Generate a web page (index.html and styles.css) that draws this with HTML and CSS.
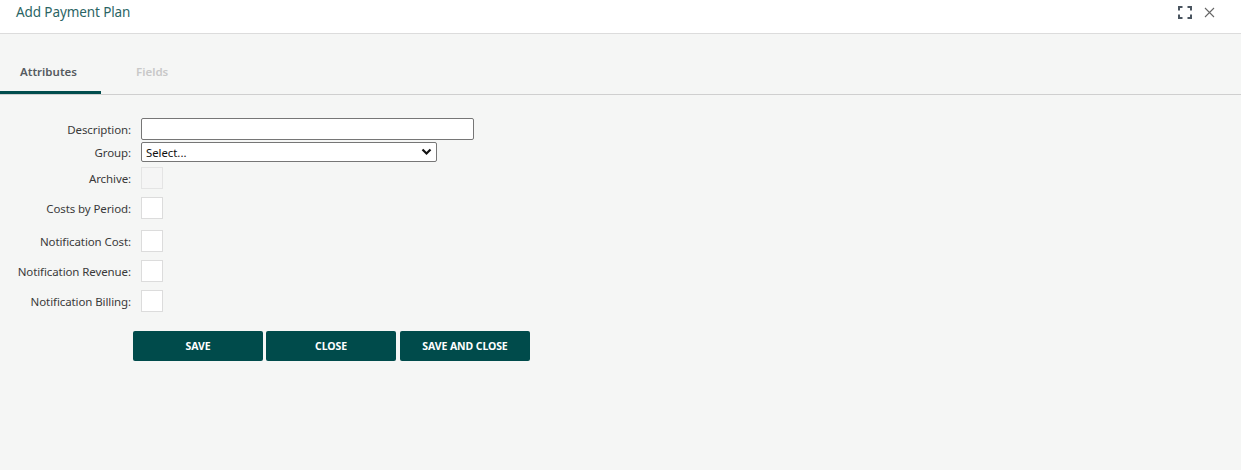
FILE: index.html
```html
<!DOCTYPE html>
<html>
<head>
<meta charset="utf-8">
<link rel="stylesheet" href="styles.css">
</head>
<body>
<div class="dialog">
  <header class="header">
    <div class="title">Add Payment Plan</div>
    <div class="tools">
      <svg class="ico-max" width="14" height="13" viewBox="0 0 14 13"><path d="M1 4.5V1H4.5M9.5 1H13V4.5M13 8.5V12H9.5M4.5 12H1V8.5" fill="none" stroke="#4a5560" stroke-width="2"/></svg>
      <svg class="ico-close" width="11" height="11" viewBox="0 0 11 11"><path d="M1 1L10 10M10 1L1 10" fill="none" stroke="#666" stroke-width="1.1"/></svg>
    </div>
  </header>
  <div class="content">
    <nav class="tabs">
      <div class="tab active">Attributes</div>
      <div class="tab">Fields</div>
    </nav>
    <form class="form">
      <div class="row r-desc"><label>Description:</label><input class="text" type="text"></div>
      <div class="row r-group"><label>Group:</label>
        <div class="select"><span>Select...</span>
          <svg width="11" height="8" viewBox="0 0 11 8"><path d="M1.5 1.5L5.5 5.5L9.5 1.5" fill="none" stroke="#111" stroke-width="2.2"/></svg>
        </div>
      </div>
      <div class="row r-arch"><label>Archive:</label><span class="box disabled"></span></div>
      <div class="row r-cost"><label>Costs by Period:</label><span class="box"></span></div>
      <div class="row r-nc"><label>Notification Cost:</label><span class="box"></span></div>
      <div class="row r-nr"><label>Notification Revenue:</label><span class="box"></span></div>
      <div class="row r-nb"><label>Notification Billing:</label><span class="box"></span></div>
      <div class="buttons">
        <button type="button" class="btn">SAVE</button>
        <button type="button" class="btn">CLOSE</button>
        <button type="button" class="btn">SAVE AND CLOSE</button>
      </div>
    </form>
  </div>
</div>
</body>
</html>
```

FILE: styles.css
```css
html, body {
  margin: 0;
  padding: 0;
  height: 100%;
}
body {
  font-family: "Noto Sans", "Open Sans", sans-serif;
  background: #f5f6f5;
  color: #333;
}
.dialog {
  height: 470px;
  display: flex;
  flex-direction: column;
}
.header {
  height: 33px;
  background: #fff;
  border-bottom: 1px solid #dcdcdc;
  display: flex;
  align-items: flex-start;
  justify-content: space-between;
  box-sizing: content-box;
}
.title {
  font-size: 13.5px;
  color: #2a6464;
  padding-left: 16px;
  padding-top: 3px;
  letter-spacing: -0.1px;
}
.tools {
  display: flex;
  gap: 12px;
  padding-top: 6px;
  padding-right: 26px;
}
.ico-close {
  margin-top: 1px;
}
.content {
  flex: 1;
  background: #f5f6f5;
}
.tabs {
  margin-top: 19px;
  display: flex;
  border-bottom: 1px solid #cfcfcf;
}
.tab {
  width: 101px;
  box-sizing: border-box;
  height: 41px;
  padding-top: 11px;
  font-size: 11.5px;
  font-weight: 600;
  color: #c8c8c8;
  text-align: center;
}
.tab.active {
  color: #555b60;
  border-bottom: 3px solid #004d4d;
  padding-right: 4px;
}
.tab + .tab {
  width: 100px;
  text-align: left;
  padding-left: 35px;
}
.form {
  padding-top: 23px;
}
.row {
  display: flex;
  align-items: center;
}
.row label {
  width: 141px;
  flex-shrink: 0;
  text-align: right;
  font-size: 11.5px;
  color: #3a3a3a;
  padding-right: 10px;
  box-sizing: border-box;
  letter-spacing: -0.1px;
}
.text {
  width: 333px;
  height: 22px;
  box-sizing: border-box;
  border: 1px solid #767676;
  border-radius: 2px;
  background: #fff;
  margin: 0;
  padding: 0 4px;
}
.r-group {
  margin-top: 2px;
}
.select {
  width: 296px;
  height: 20px;
  box-sizing: border-box;
  border: 1px solid #767676;
  border-radius: 2px;
  background: #fff;
  display: flex;
  align-items: center;
  justify-content: space-between;
  padding: 0 4px 0 4px;
  font-size: 11.3px;
  color: #111;
}
.box {
  width: 22px;
  height: 22px;
  box-sizing: border-box;
  border: 1px solid #dcdcdc;
  background: #fff;
  display: block;
}
.box.disabled {
  background: #f5f5f5;
  border-color: #e4e4e4;
}
.r-arch { margin-top: 5px; }
.r-cost { margin-top: 8px; }
.r-nc { margin-top: 11px; }
.r-nr { margin-top: 8px; }
.r-nb { margin-top: 8px; }
.buttons {
  display: flex;
  gap: 3px;
  margin-top: 19px;
  padding-left: 133px;
}
.btn {
  width: 130px;
  height: 30px;
  border: none;
  border-radius: 2px;
  background: #004b4b;
  color: #fff;
  font-family: "Noto Sans", "Open Sans", sans-serif;
  font-weight: 700;
  font-size: 10.5px;
  letter-spacing: -0.1px;
  padding: 0;
}
.btn:last-child {
  margin-left: 1px;
}
```
